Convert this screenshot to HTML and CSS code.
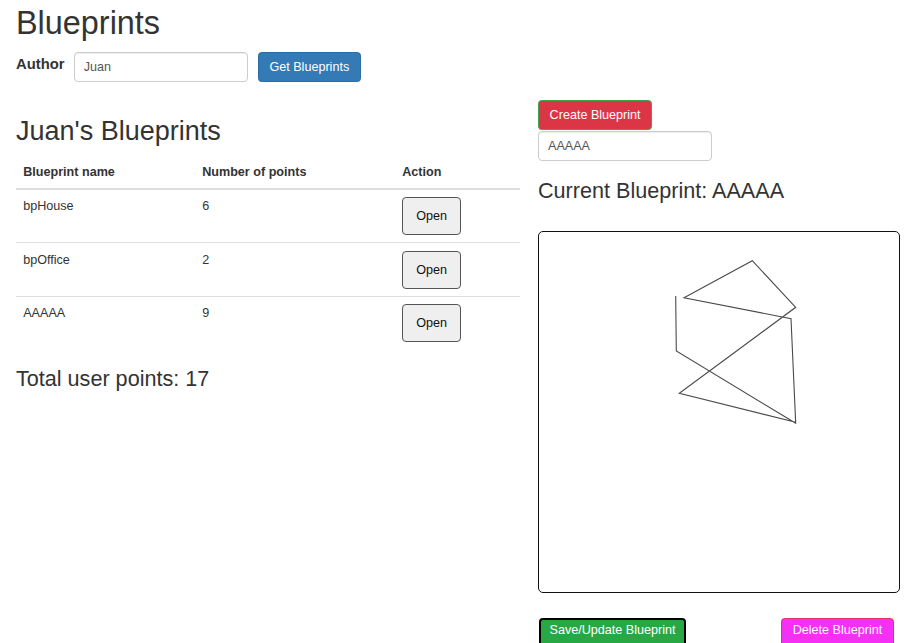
FILE: index.html
```html
<!DOCTYPE html>
<html lang="en">
<head>
<meta charset="utf-8">
<title>Blueprints</title>
<link rel="stylesheet" href="styles.css">
</head>
<body>
<div class="page">
  <h1 class="title">Blueprints</h1>
  <div class="author-row">
    <label class="author-label" for="author">Author</label>
    <input id="author" class="text-input" type="text" value="Juan">
    <button class="btn btn-primary get-btn" type="button">Get Blueprints</button>
  </div>
  <div class="main">
    <div class="left-col">
      <h2 class="subtitle">Juan's Blueprints</h2>
      <table class="bp-table">
        <thead>
          <tr>
            <th class="c-name">Blueprint name</th>
            <th class="c-points">Number of points</th>
            <th class="c-action">Action</th>
          </tr>
        </thead>
        <tbody>
          <tr>
            <td>bpHouse</td>
            <td>6</td>
            <td><button class="open-btn" type="button">Open</button></td>
          </tr>
          <tr>
            <td>bpOffice</td>
            <td>2</td>
            <td><button class="open-btn" type="button">Open</button></td>
          </tr>
          <tr>
            <td>AAAAA</td>
            <td>9</td>
            <td><button class="open-btn" type="button">Open</button></td>
          </tr>
        </tbody>
      </table>
      <h3 class="total">Total user points: 17</h3>
    </div>
    <div class="right-col">
      <button class="btn create-btn" type="button">Create Blueprint</button>
      <input class="text-input name-input" type="text" value="AAAAA">
      <h3 class="current">Current Blueprint: AAAAA</h3>
      <div class="canvas-box">
        <svg class="drawing" width="360" height="360" viewBox="0 0 360 360" xmlns="http://www.w3.org/2000/svg">
          <polyline points="136.7,64 137.3,119 256.7,191.3 252,86.7 145,65.7 213.3,28.7 256.7,75.3 140.3,161.3 256.7,190.3" fill="none" stroke="#4a4a4a" stroke-width="1.1" stroke-linejoin="miter"/>
        </svg>
      </div>
      <div class="actions">
        <button class="btn save-btn" type="button">Save/Update Blueprint</button>
        <button class="btn delete-btn" type="button">Delete Blueprint</button>
      </div>
    </div>
  </div>
</div>
</body>
</html>
```
FILE: styles.css
```css
* {
  box-sizing: border-box;
}

html,
body {
  overflow: hidden;
}

body {
  margin: 0;
  font-family: "Liberation Sans", Arial, Helvetica, sans-serif;
  font-size: 12.6px;
  line-height: 18px;
  color: #333;
  background: #fff;
}

.page {
  padding-left: 16px;
}

.title {
  font-size: 32.4px;
  line-height: 35.6px;
  font-weight: 400;
  margin: 6px 0 0 0;
}

.author-row {
  display: flex;
  align-items: flex-start;
  margin-top: 10.4px;
}

.author-label {
  font-weight: 700;
  font-size: 14.8px;
  line-height: 18px;
  padding-top: 3.4px;
  margin-right: 9.3px;
}

.text-input {
  width: 174px;
  height: 30px;
  border: 1px solid #ccc;
  border-radius: 4px;
  padding: 0 9px;
  font-family: "Liberation Sans", Arial, Helvetica, sans-serif;
  font-size: 12.6px;
  color: #555;
  background: #fff;
  box-shadow: inset 0 1px 1px rgba(0, 0, 0, 0.075);
  outline: none;
}

.btn {
  display: inline-block;
  height: 30px;
  padding: 0 10.6px;
  font-family: "Liberation Sans", Arial, Helvetica, sans-serif;
  font-size: 12.6px;
  line-height: 28px;
  border: 1px solid transparent;
  border-radius: 3.6px;
  color: #fff;
  cursor: pointer;
  white-space: nowrap;
}

.btn-primary {
  background: #337ab7;
  border-color: #2e6da4;
}

.get-btn {
  margin-left: 10px;
}

.main {
  display: flex;
  align-items: flex-start;
  margin-top: 17px;
}

.left-col {
  width: 504px;
  flex: none;
}

.subtitle {
  font-size: 27px;
  line-height: 29.7px;
  font-weight: 400;
  margin: 18px 0 9px;
}

.bp-table {
  width: 100%;
  border-collapse: collapse;
  border-spacing: 0;
  margin-bottom: 18px;
}

.bp-table th {
  text-align: left;
  font-weight: 700;
  padding: 7.2px;
  line-height: 18px;
  vertical-align: bottom;
  border-bottom: 2px solid #ddd;
}

.bp-table td {
  padding: 7.2px;
  line-height: 18px;
  vertical-align: top;
  border-top: 1px solid #ddd;
}

.c-name {
  width: 179px;
}

.c-points {
  width: 200px;
}

.c-action {
  width: 125px;
}

.open-btn {
  display: block;
  font-family: "Liberation Sans", Arial, Helvetica, sans-serif;
  font-size: 12.6px;
  line-height: 18px;
  padding: 9px 13px;
  border: 1px solid #555;
  border-radius: 4px;
  background: #efefef;
  color: #111;
}

.total {
  font-size: 21.6px;
  line-height: 23.76px;
  font-weight: 400;
  margin: 18px 0 9px;
}

.right-col {
  width: 362px;
  flex: none;
  margin-left: 18px;
  padding-top: 1px;
}

.create-btn {
  display: block;
  background: #dc3545;
  border-color: #3fa34d;
}

.name-input {
  display: block;
  margin-top: 1px;
}

.current {
  font-size: 21.6px;
  line-height: 23.76px;
  font-weight: 400;
  margin: 17.6px 0 28.6px;
}

.canvas-box {
  width: 362px;
  height: 362px;
  border: 1px solid #111;
  border-radius: 5px;
  overflow: hidden;
}

.drawing {
  display: block;
}

.actions {
  display: flex;
  align-items: flex-start;
  margin-top: 25px;
}

.save-btn {
  margin-left: 1px;
  padding: 0 8.5px 5px;
  line-height: 20px;
  background: #28a745;
  border: 2px solid #000;
  border-radius: 4px;
}

.delete-btn {
  margin-left: 95px;
  padding-bottom: 5px;
  line-height: 22px;
  background: #f52ff4;
  border-color: #e0346e;
}
```
